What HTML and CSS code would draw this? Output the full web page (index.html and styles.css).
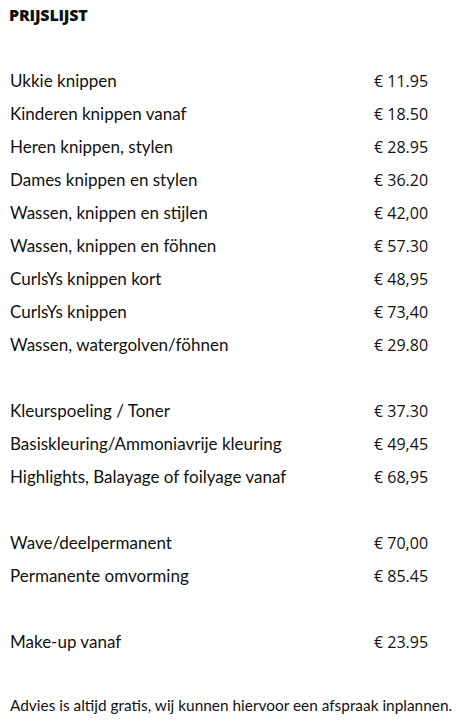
FILE: index.html
```html
<!DOCTYPE html>
<html lang="nl">
<head>
<meta charset="utf-8">
<title>Prijslijst</title>
<link rel="stylesheet" href="styles.css">
</head>
<body>
<div class="page">
  <h1 class="title">PRIJSLIJST</h1>
  <table class="prices">
    <tbody>
      <tr><td class="label">Ukkie knippen</td><td class="price">€ 11.95</td></tr>
      <tr><td class="label">Kinderen knippen vanaf</td><td class="price">€ 18.50</td></tr>
      <tr><td class="label">Heren knippen, stylen</td><td class="price">€ 28.95</td></tr>
      <tr><td class="label">Dames knippen en stylen</td><td class="price">€ 36.20</td></tr>
      <tr><td class="label">Wassen, knippen en stijlen</td><td class="price">€ 42,00</td></tr>
      <tr><td class="label">Wassen, knippen en föhnen</td><td class="price">€ 57.30</td></tr>
      <tr><td class="label">CurlsYs knippen kort</td><td class="price">€ 48,95</td></tr>
      <tr><td class="label">CurlsYs knippen</td><td class="price">€ 73,40</td></tr>
      <tr><td class="label">Wassen, watergolven/föhnen</td><td class="price">€ 29.80</td></tr>
      <tr class="gap"><td colspan="2"></td></tr>
      <tr><td class="label">Kleurspoeling / Toner</td><td class="price">€ 37.30</td></tr>
      <tr><td class="label">Basiskleuring/Ammoniavrije kleuring</td><td class="price">€ 49,45</td></tr>
      <tr><td class="label">Highlights, Balayage of foilyage vanaf</td><td class="price">€ 68,95</td></tr>
      <tr class="gap"><td colspan="2"></td></tr>
      <tr><td class="label">Wave/deelpermanent</td><td class="price">€ 70,00</td></tr>
      <tr><td class="label">Permanente omvorming</td><td class="price">€ 85.45</td></tr>
      <tr class="gap"><td colspan="2"></td></tr>
      <tr><td class="label">Make-up vanaf</td><td class="price">€ 23.95</td></tr>
    </tbody>
  </table>
  <p class="note">Advies is altijd gratis, wij kunnen hiervoor een afspraak inplannen.</p>
</div>
</body>
</html>
```

FILE: styles.css
```css
html, body {
  margin: 0;
  padding: 0;
  background: #fff;
}
.page {
  padding: 5px 0 0 10px;
  color: #111;
  font-family: "Lato", "Open Sans", sans-serif;
}
.title {
  margin: 0 0 0 -1px;
  font-family: "Open Sans", sans-serif;
  font-size: 16px;
  font-weight: 800;
  line-height: 20px;
  letter-spacing: -0.2px;
}
.prices {
  border-collapse: collapse;
  margin-top: 39px;
  width: 440px;
}
.prices td {
  height: 33px;
  padding: 0;
  vertical-align: middle;
}
.label {
  font-size: 17px;
  width: 364px;
}
.price {
  font-family: "Open Sans", sans-serif;
  font-size: 16px;
}
.note {
  margin: 37px 0 0;
  font-size: 15.4px;
  line-height: 20px;
}
```
